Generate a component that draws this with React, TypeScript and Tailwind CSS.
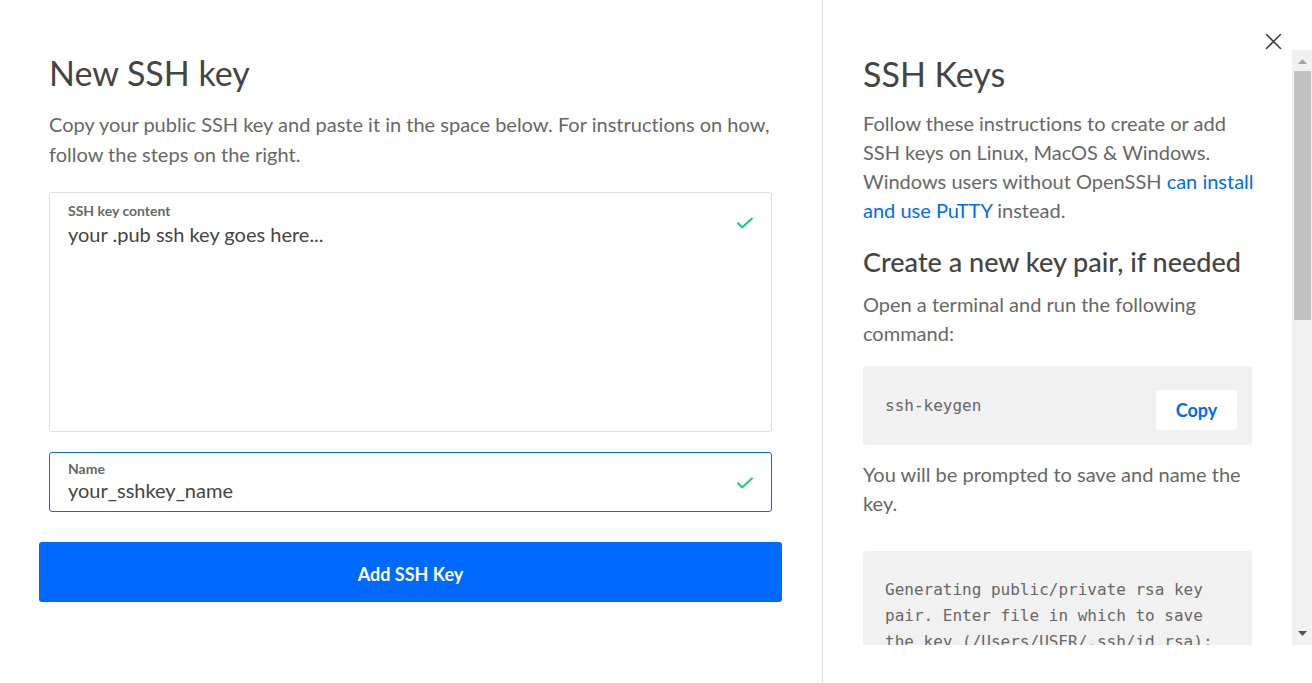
import { useState } from "react";

function CheckIcon() {
  return (
    <svg width="18" height="12" viewBox="0 0 18 12" fill="none" stroke="#15cd72" strokeWidth="2" strokeLinecap="round" strokeLinejoin="round" aria-hidden="true" className="shrink-0">
      <path d="M2 6.2 L6.3 10.3 L15.9 1.5" />
    </svg>
  );
}

function Scrollbar() {
  return (
    <div aria-hidden="true" className="flex w-5 shrink-0 flex-col bg-[#f1f1f1]">
      <svg width="20" height="21" viewBox="0 0 20 21" className="shrink-0">
        <path d="M6 14 L10.5 9 L15 14 Z" fill="#a3a3a3" />
      </svg>
      <div className="flex grow flex-col pr-px pl-0.5">
        <div className="h-[45%] bg-[#c1c1c1]" />
      </div>
      <svg width="20" height="21" viewBox="0 0 20 21" className="shrink-0">
        <path d="M6 7 L10.5 12 L15 7 Z" fill="#505050" />
      </svg>
    </div>
  );
}

function KeyForm() {
  const [content, setContent] = useState("your .pub ssh key goes here...");
  const [name, setName] = useState("your_sshkey_name");
  return (
    <form className="flex flex-col" onSubmit={(e) => e.preventDefault()}>
      <div className="flex flex-col gap-5 px-[10px]">
        <div className="flex h-60 items-start rounded-[3px] border border-[#dfdfdf] pr-[17px] pl-[18px]">
          <div className="flex h-full grow flex-col pt-2">
            <label htmlFor="content" className="text-[14px] leading-5 font-bold text-[#676767]">SSH key content</label>
            <textarea id="content" value={content} onChange={(e) => setContent(e.target.value)} className="grow resize-none text-[20px] leading-[26px] text-[#444] outline-none" />
          </div>
          <div className="pt-6">
            <CheckIcon />
          </div>
        </div>
        <div className="flex h-15 items-center rounded-[3px] border border-[#0069ff] pt-0.5 pr-[17px] pl-[18px]">
          <div className="flex grow flex-col pb-1">
            <label htmlFor="name" className="text-[14px] leading-[18px] font-bold text-[#676767]">Name</label>
            <input id="name" type="text" value={name} onChange={(e) => setName(e.target.value)} className="h-6 text-[20px] leading-6 text-[#444] outline-none" />
          </div>
          <CheckIcon />
        </div>
      </div>
      <button type="submit" className="mt-[30px] h-15 rounded-[3px] bg-[#0069ff] pt-1 text-[18px] font-bold text-white">Add SSH Key</button>
    </form>
  );
}

export default function App() {
  return (
    <div className="flex h-screen bg-white font-['Lato','Liberation_Sans',sans-serif] text-[#676767] [font-variant-ligatures:none]">
      <main className="grow pt-12 pr-10 pl-[39px]">
        <header className="mb-[23px] px-[10px]">
          <h1 className="text-[34px] leading-[50px] text-[#444]">New SSH key</h1>
          <p className="mt-[11px] text-[20px] leading-[30px]">
            Copy your public SSH key and paste it in the space below. For instructions on how, follow the steps on the right.
          </p>
        </header>
        <KeyForm />
      </main>

      <aside className="flex w-[490px] shrink-0 flex-col border-l border-[#dfdfdf]">
        <div className="flex h-[50px] shrink-0 items-end justify-end pr-[30px]">
          <button type="button" aria-label="Close" className="size-[17px] text-[#444]">
            <svg width="17" height="17" viewBox="0 0 17 17" fill="none" stroke="currentColor" strokeWidth="1.6" strokeLinecap="round">
              <path d="M1.5 1.5 L15.5 15.5 M15.5 1.5 L1.5 15.5" />
            </svg>
          </button>
        </div>
        <div className="mb-[38px] flex min-h-0 grow">
          <div className="min-w-0 grow overflow-hidden px-10">
            <h2 className="text-[34px] leading-12 text-[#444]">SSH Keys</h2>
            <p className="-mr-3 mt-[11px] text-[20px] leading-[29px]">
              Follow these instructions to create or add SSH keys on Linux, MacOS &amp; Windows. Windows users without OpenSSH{" "}
              <a href="#putty" className="text-[#0069ff]">can install and use PuTTY</a> instead.
            </p>
            <h3 className="mt-5 text-[27px] leading-[34px] font-medium text-[#444]">Create a new key pair, if needed</h3>
            <p className="mt-[11px] text-[20px] leading-[29px]">Open a terminal and run the following command:</p>
            <div className="mt-[18px] flex h-[79px] items-center justify-between rounded-[3px] bg-[#f1f1f1] pr-[15px] pl-[22px]">
              <code className="font-['DejaVu_Sans_Mono',monospace] text-[16px]">ssh-keygen</code>
              <button type="button" className="mt-[9px] h-10 w-[81px] rounded-[3px] bg-white text-[18px] font-bold text-[#0069ff]">Copy</button>
            </div>
            <p className="mt-[15px] text-[20px] leading-[29px]">You will be prompted to save and name the key.</p>
            <pre className="mt-[33px] rounded-[3px] bg-[#f1f1f1] px-[22px] py-[26px] font-['DejaVu_Sans_Mono',monospace] text-[16px] leading-[26px] whitespace-pre-wrap">
              Generating public/private rsa key pair. Enter file in which to save the key (/Users/USER/.ssh/id_rsa):
            </pre>
          </div>
          <Scrollbar />
        </div>
      </aside>
    </div>
  );
}
